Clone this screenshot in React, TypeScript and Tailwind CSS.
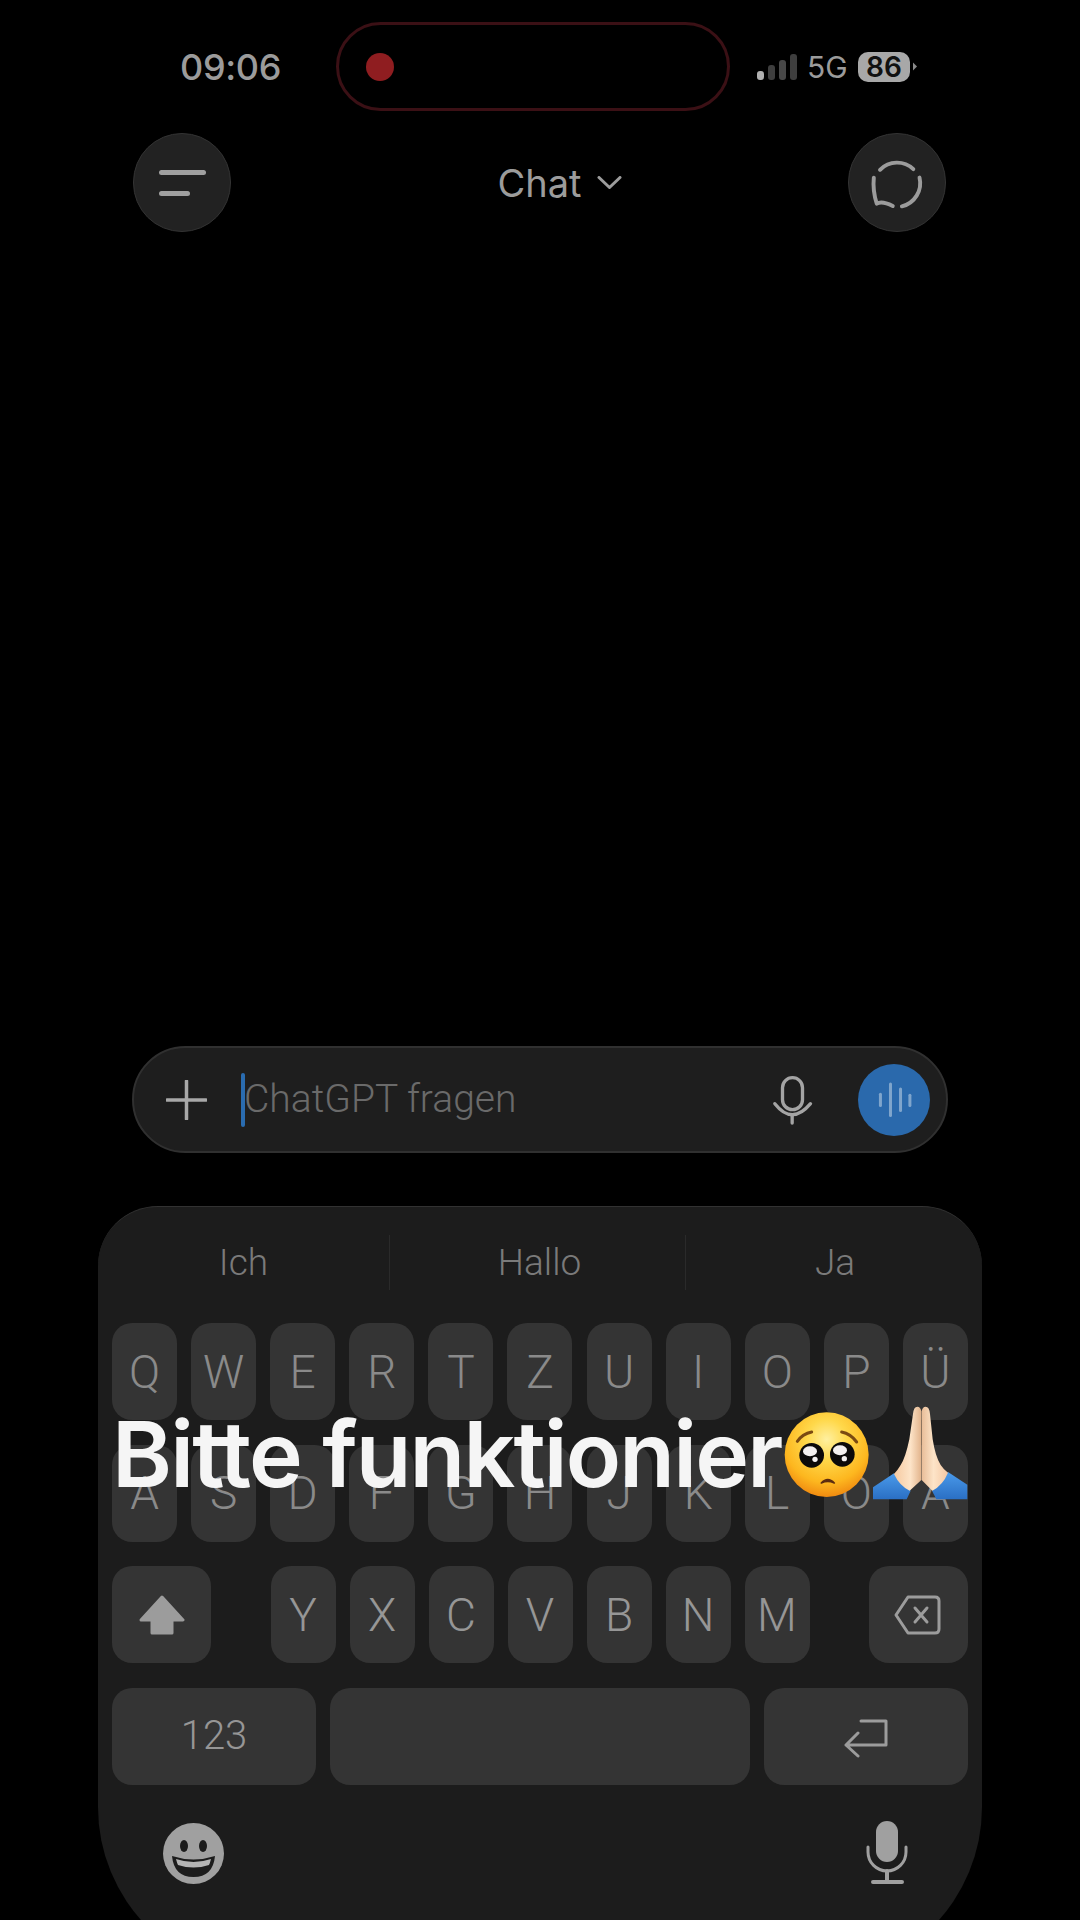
import clsx from "clsx"

const rowOne = ["Q", "W", "E", "R", "T", "Z", "U", "I", "O", "P", "Ü"]
const rowTwo = ["A", "S", "D", "F", "G", "H", "J", "K", "L", "Ö", "Ä"]
const rowThree = ["Y", "X", "C", "V", "B", "N", "M"]

function Key({ label, bright }: { label: string; bright?: boolean }) {
  return (
    <div
      className={clsx(
        "flex h-[97px] w-[65px] items-center justify-center rounded-[20px] bg-[#343434] text-[46px] font-[350] leading-none",
        bright ? "text-[#969696]" : "text-[#8a8a8a]",
      )}
    >
      {label}
    </div>
  )
}

function PleadingFace() {
  return (
    <svg viewBox="0 0 300 300" className="h-[100px] w-[100px] shrink-0">
      <defs>
        <radialGradient id="faceFill" cx="50%" cy="32%" r="68%">
          <stop offset="0%" stopColor="#fff0a0" />
          <stop offset="35%" stopColor="#ffd84a" />
          <stop offset="75%" stopColor="#fdb71f" />
          <stop offset="100%" stopColor="#f08a10" />
        </radialGradient>
      </defs>
      <ellipse cx="140" cy="158" rx="126" ry="127" fill="url(#faceFill)" />
      <path d="M52 118 Q68 95 95 90" fill="none" stroke="#7a4a12" strokeWidth="9" strokeLinecap="round" />
      <path d="M185 90 Q212 95 230 120" fill="none" stroke="#7a4a12" strokeWidth="9" strokeLinecap="round" />
      <circle cx="95" cy="160" r="37" fill="#0c0a0a" />
      <circle cx="187" cy="157" r="37" fill="#0c0a0a" />
      <ellipse cx="90" cy="148" rx="21" ry="15" fill="#f4f0f0" />
      <ellipse cx="180" cy="145" rx="21" ry="15" fill="#f4f0f0" />
      <circle cx="105" cy="172" r="8" fill="#f4f0f0" />
      <circle cx="193" cy="170" r="8" fill="#f4f0f0" />
      <path d="M124 243 Q143 222 163 243 Q143 234 124 243Z" fill="#5c2c10" stroke="#5c2c10" strokeWidth="5" strokeLinejoin="round" />
    </svg>
  )
}

function PrayingHands() {
  return (
    <svg viewBox="0 0 312 312" className="-ml-[12px] h-[104px] w-[104px] shrink-0">
      <defs>
        <linearGradient id="handLeft" x1="0" y1="0" x2="1" y2="0">
          <stop offset="0%" stopColor="#f6c9a0" />
          <stop offset="60%" stopColor="#fde4c8" />
          <stop offset="100%" stopColor="#e2b48c" />
        </linearGradient>
        <linearGradient id="handRight" x1="0" y1="0" x2="1" y2="0">
          <stop offset="0%" stopColor="#e8bd98" />
          <stop offset="45%" stopColor="#fde4c8" />
          <stop offset="100%" stopColor="#f4c8a4" />
        </linearGradient>
        <linearGradient id="sleeve" x1="0" y1="0" x2="0" y2="1">
          <stop offset="0%" stopColor="#4a9aea" />
          <stop offset="100%" stopColor="#2a6fc4" />
        </linearGradient>
      </defs>
      <path d="M78 220 L15 262 L15 298 L116 298 L128 272Z" fill="url(#sleeve)" />
      <path d="M240 216 L298 254 L298 298 L205 298 L192 272Z" fill="url(#sleeve)" />
      <path d="M148 20 Q137 20 135 42 L124 118 Q112 175 98 195 Q88 212 78 222 Q95 258 125 272 L160 240 L160 34 Q158 20 148 20Z" fill="url(#handLeft)" />
      <path d="M173 20 Q184 20 186 42 L194 118 Q202 170 218 195 Q228 210 240 218 Q225 255 193 272 L161 240 L161 34 Q163 20 173 20Z" fill="url(#handRight)" />
    </svg>
  )
}

export default function App() {
  return (
    <div className="relative flex h-[1920px] w-[1080px] flex-col overflow-hidden bg-black font-['Inter',sans-serif]">
      {/* status bar */}
      <div className="mt-[22px] flex h-[89px] shrink-0 items-center pl-[180px]">
        <div className="w-[156px] text-[36px] font-medium leading-none tracking-[-0.01em] text-[#9b9b9b]">09:06</div>
        <div className="flex h-[89px] w-[394px] items-center rounded-full border-[3px] border-[#3b1015] pl-[27px]">
          <div className="h-[28px] w-[28px] rounded-full bg-[#8f1d20]" />
        </div>
        <div className="ml-[27px] flex items-end gap-[4px]">
          <div className="h-[9px] w-[7px] rounded-[3px] bg-[#b0b0b0]" />
          <div className="h-[15px] w-[7px] rounded-[3px] bg-[#3e3e3e]" />
          <div className="h-[20px] w-[7px] rounded-[3px] bg-[#484848]" />
          <div className="h-[26px] w-[7px] rounded-[3px] bg-[#3e3e3e]" />
        </div>
        <div className="ml-[10px] w-[41px] text-[30px] leading-none text-[#9b9b9b]">5G</div>
        <div className="ml-[10px] flex h-[30px] w-[52px] items-center justify-center rounded-[10px] bg-[#a8a8a8] text-[28px] font-semibold leading-none text-[#111111]">
          86
        </div>
        <svg viewBox="0 0 4 8" className="ml-[3px] h-[9px] w-[4px]">
          <path d="M0 0 L4 4 L0 8Z" fill="#8a8a8a" />
        </svg>
      </div>

      {/* header */}
      <div className="mt-[22px] flex shrink-0 items-center justify-between pl-[133px] pr-[134px]">
        <div className="flex h-[99px] w-[98px] flex-col justify-center gap-[16px] rounded-full border border-[#333333] bg-[#222222] pl-[25px]">
          <div className="h-[5px] w-[47px] rounded-full bg-[#a0a0a0]" />
          <div className="h-[5px] w-[31px] rounded-full bg-[#a0a0a0]" />
        </div>
        <div className="flex items-center gap-[14px] pl-[41px]">
          <span className="text-[38px] font-normal leading-none text-[#9c9c9c]">Chat</span>
          <svg viewBox="0 0 25 13" className="h-[13px] w-[27px]">
            <path d="M2 1.5 L12.5 11.5 L23 1.5" fill="none" stroke="#9c9c9c" strokeWidth="3" strokeLinecap="round" strokeLinejoin="round" />
          </svg>
        </div>
        <div className="h-[99px] w-[98px] rounded-full border border-[#333333] bg-[#222222]">
          <svg viewBox="24 24 294 294" className="h-full w-full">
            <g fill="none" stroke="#9c9c9c" strokeWidth="12" strokeLinecap="round" strokeLinejoin="round">
              <path d="M119 132 A73 73 0 0 1 221 130" />
              <path d="M240 156 A73 73 0 0 1 186 244" />
              <path d="M100 156 Q96 195 109 236 Q124 226 158 243" />
            </g>
          </svg>
        </div>
      </div>

      {/* input */}
      <div className="mx-[132px] mt-[814px] flex h-[107px] shrink-0 items-center rounded-full border-2 border-[#303030] bg-[#1e1e1e] pl-[32px] pr-[16px]">
        <svg viewBox="0 0 41 40" className="h-[40px] w-[41px] shrink-0">
          <path d="M20.5 1 V39 M1 20 H40" fill="none" stroke="#a8a8a8" strokeWidth="3.5" strokeLinecap="round" />
        </svg>
        <div className="ml-[34px] h-[54px] w-[4px] rounded-full bg-[#2a6cb0]" />
        <span className="-ml-[1px] font-['Roboto',sans-serif] text-[39px] font-[350] leading-none text-[#6a6a6a]">ChatGPT fragen</span>
        <svg viewBox="40 60 125 150" className="ml-auto h-[50px] w-[42px]">
          <g fill="none" stroke="#a4a4a4" strokeWidth="10" strokeLinecap="round">
            <rect x="71" y="68" width="60" height="96" rx="30" />
            <path d="M48 146 Q100 212 155 146" />
            <path d="M100 184 V204" />
          </g>
        </svg>
        <div className="ml-[44px] h-[72px] w-[72px] rounded-full bg-[#2a69ac]">
          <svg viewBox="295 28 215 215" className="h-full w-full">
            <g fill="none" stroke="#7fa5cc" strokeWidth="9" strokeLinecap="round">
              <path d="M362 118 V152" />
              <path d="M392 88 V182" />
              <path d="M422 103 V167" />
              <path d="M450 121 V152" />
            </g>
          </svg>
        </div>
      </div>

      {/* keyboard */}
      <div className="ml-[98px] mt-[53px] h-[771px] w-[884px] shrink-0 rounded-b-[170px] rounded-t-[60px] border-t border-[#323232] bg-[#1c1c1c] pt-[28px] font-['Roboto',sans-serif]">
        <div className="flex h-[55px] text-[37px] font-[350] text-[#7a7a7a]">
          <div className="flex w-[292px] items-center justify-center border-r border-[#2a2a2a]">Ich</div>
          <div className="flex w-[296px] items-center justify-center border-r border-[#2a2a2a] pl-[4px]">Hallo</div>
          <div className="flex w-[296px] items-center justify-center pl-[2px]">Ja</div>
        </div>

        <div className="mt-[33px] flex flex-col gap-[24.5px] px-[14px]">
          <div className="flex gap-[14.1px]">
            {rowOne.map((k) => (
              <Key key={k} label={k} />
            ))}
          </div>
          <div className="flex gap-[14.1px]">
            {rowTwo.map((k) => (
              <Key key={k} label={k} />
            ))}
          </div>
          <div className="flex items-center justify-between">
            <div className="flex h-[97px] w-[99px] items-center justify-center rounded-[20px] bg-[#343434]">
              <svg viewBox="0 0 46 40" className="h-[40px] w-[46px]">
                <path d="M23 2 L44 25 H33 V38 H13 V25 H2Z" fill="#9c9c9c" stroke="#9c9c9c" strokeWidth="3" strokeLinejoin="round" />
              </svg>
            </div>
            <div className="flex gap-[14px]">
              {rowThree.map((k) => (
                <Key key={k} label={k} bright />
              ))}
            </div>
            <div className="flex h-[97px] w-[99px] items-center justify-center rounded-[20px] bg-[#343434]">
              <svg viewBox="0 0 47 40" className="-ml-[2px] h-[40px] w-[47px]">
                <path d="M14 2 H41 Q45 2 45 6 V34 Q45 38 41 38 H14 L2 20Z" fill="none" stroke="#9c9c9c" strokeWidth="3" strokeLinejoin="round" />
                <path d="M21 13 L33 27 M33 13 L21 27" fill="none" stroke="#9c9c9c" strokeWidth="3" strokeLinecap="round" />
              </svg>
            </div>
          </div>
          <div className="flex gap-[14px]">
            <div className="flex h-[97px] w-[204px] items-center justify-center rounded-[20px] bg-[#343434] text-[40px] font-[350] leading-none text-[#969696]">
              123
            </div>
            <div className="h-[97px] flex-1 rounded-[20px] bg-[#343434]" />
            <div className="flex h-[97px] w-[204px] items-center justify-center rounded-[20px] bg-[#343434]">
              <svg viewBox="0 0 44 39" className="mt-[4px] h-[39px] w-[44px]">
                <path d="M17 2 H42 V26 H2 M2 26 L14 14 M2 26 L14 37" fill="none" stroke="#9c9c9c" strokeWidth="3" strokeLinecap="round" strokeLinejoin="round" />
              </svg>
            </div>
          </div>
        </div>

        <div className="mt-[38px] flex items-center justify-between pl-[65px] pr-[74px]">
          <svg viewBox="0 0 61 61" className="h-[61px] w-[61px]">
            <circle cx="30.5" cy="30.5" r="30.5" fill="#a0a0a0" />
            <ellipse cx="21" cy="23" rx="4" ry="6" fill="#1c1c1c" />
            <ellipse cx="40" cy="23" rx="4" ry="6" fill="#1c1c1c" />
            <path d="M9 33 Q30.5 40 52 33 Q50 54 30.5 54 Q11 54 9 33Z" fill="#1c1c1c" />
            <path d="M13 36 Q30.5 42 48 36 Q47 40 46 42 Q30.5 47 15 42 Q14 40 13 36Z" fill="#b4b4b4" />
          </svg>
          <svg viewBox="0 0 42 64" className="-mt-[3px] h-[64px] w-[42px]">
            <rect x="10" y="1" width="22" height="41" rx="11" fill="#a0a0a0" />
            <path d="M2 27 V32 A19 19 0 0 0 40 32 V27" fill="none" stroke="#a0a0a0" strokeWidth="3" strokeLinecap="round" />
            <path d="M21 51 V61 M7 62 H36" fill="none" stroke="#a0a0a0" strokeWidth="4" strokeLinecap="round" />
          </svg>
        </div>
      </div>

      {/* caption over the keyboard */}
      <div className="absolute left-[112px] top-[1400px] flex h-[104px] items-center">
        <span className="w-[668px] whitespace-nowrap pt-[5px] text-[91px] font-semibold leading-none tracking-[-0.02em] text-[#f5f5f5]">
          Bitte funktionier
        </span>
        <PleadingFace />
        <PrayingHands />
      </div>
    </div>
  )
}
